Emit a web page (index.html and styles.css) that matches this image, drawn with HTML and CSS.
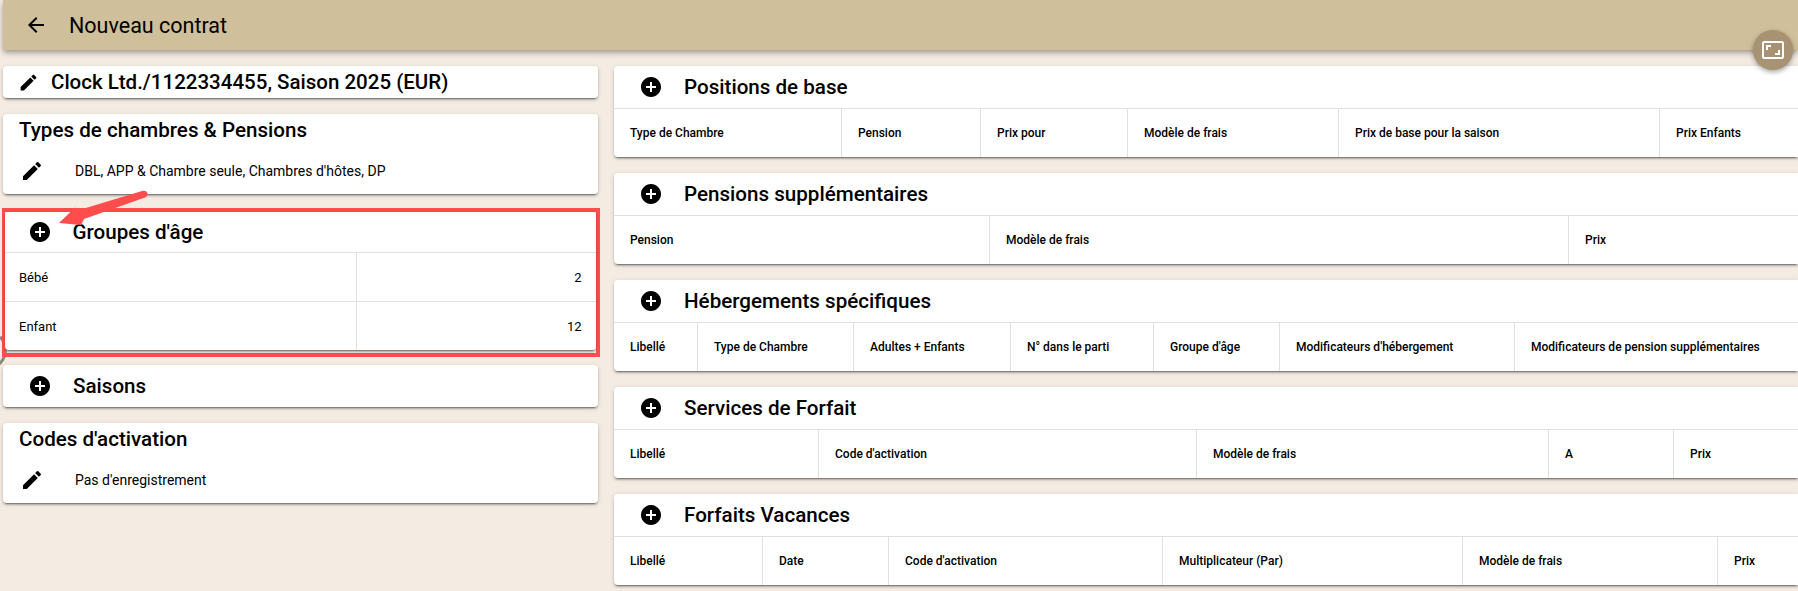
FILE: index.html
```html
<!DOCTYPE html>
<html lang="fr">
<head>
    <meta charset="UTF-8">
    <title>Nouveau contrat</title>
    <link rel="stylesheet" href="styles.css">
</head>
<body>
    <svg class="icon-defs" aria-hidden="true">
        <symbol id="ic-add" viewBox="0 0 24 24"><path d="M12 2C6.48 2 2 6.48 2 12s4.48 10 10 10 10-4.48 10-10S17.52 2 12 2zm5 11h-4v4h-2v-4H7v-2h4V7h2v4h4v2z"/></symbol>
        <symbol id="ic-edit" viewBox="0 0 24 24"><path d="M3 17.25V21h3.75L17.81 9.94l-3.75-3.75L3 17.25zM20.71 7.04a1 1 0 0 0 0-1.41l-2.34-2.34a1 1 0 0 0-1.41 0l-1.83 1.83 3.75 3.75 1.83-1.83z"/></symbol>
    </svg>

    <header class="topbar">
        <svg class="back-icon" viewBox="0 0 24 24"><path d="M20 11H7.83l5.59-5.59L12 4l-8 8 8 8 1.41-1.41L7.83 13H20v-2z"/></svg>
        <span class="topbar-title">Nouveau contrat</span>
    </header>

    <button class="fab">
        <svg viewBox="0 0 24 24"><path d="M19 12h-2v3h-3v2h5v-5zM7 9h3V7H5v5h2V9zm14-6H3c-1.1 0-2 .9-2 2v14c0 1.1.9 2 2 2h18c1.1 0 2-.9 2-2V5c0-1.1-.9-2-2-2zm0 16.01H3V4.99h18v14.02z"/></svg>
    </button>

    <main class="columns">
        <section class="left-col">
            <div class="card contract-card">
                <svg class="icon icon-small"><use href="#ic-edit"/></svg>
                <span class="card-title">Clock Ltd./1122334455, Saison 2025 (EUR)</span>
            </div>

            <div class="card text-card">
                <h2 class="card-title">Types de chambres &amp; Pensions</h2>
                <div class="text-row">
                    <svg class="icon"><use href="#ic-edit"/></svg>
                    <span>DBL, APP &amp; Chambre seule, Chambres d'hôtes, DP</span>
                </div>
            </div>

            <div class="highlight">
                <div class="card">
                    <div class="card-head age-head">
                        <svg class="icon"><use href="#ic-add"/></svg>
                        <h2 class="card-title">Groupes d'âge</h2>
                    </div>
                    <div class="age-row">
                        <div class="cell">Bébé</div>
                        <div class="cell cell-right">2</div>
                    </div>
                    <div class="age-row">
                        <div class="cell">Enfant</div>
                        <div class="cell cell-right">12</div>
                    </div>
                </div>
            </div>

            <div class="card">
                <div class="card-head saisons-head">
                    <svg class="icon"><use href="#ic-add"/></svg>
                    <h2 class="card-title">Saisons</h2>
                </div>
            </div>

            <div class="card text-card">
                <h2 class="card-title">Codes d'activation</h2>
                <div class="text-row">
                    <svg class="icon"><use href="#ic-edit"/></svg>
                    <span>Pas d'enregistrement</span>
                </div>
            </div>
        </section>

        <section class="right-col">
            <div class="card wide-card">
                <div class="card-head">
                    <svg class="icon"><use href="#ic-add"/></svg>
                    <h2 class="card-title">Positions de base</h2>
                </div>
                <div class="table-row cols-base">
                    <div class="cell">Type de Chambre</div>
                    <div class="cell">Pension</div>
                    <div class="cell">Prix pour</div>
                    <div class="cell">Modèle de frais</div>
                    <div class="cell">Prix de base pour la saison</div>
                    <div class="cell">Prix Enfants</div>
                </div>
            </div>

            <div class="card wide-card">
                <div class="card-head">
                    <svg class="icon"><use href="#ic-add"/></svg>
                    <h2 class="card-title">Pensions supplémentaires</h2>
                </div>
                <div class="table-row cols-pensions">
                    <div class="cell">Pension</div>
                    <div class="cell">Modèle de frais</div>
                    <div class="cell">Prix</div>
                </div>
            </div>

            <div class="card wide-card">
                <div class="card-head">
                    <svg class="icon"><use href="#ic-add"/></svg>
                    <h2 class="card-title">Hébergements spécifiques</h2>
                </div>
                <div class="table-row cols-hebergements">
                    <div class="cell">Libellé</div>
                    <div class="cell">Type de Chambre</div>
                    <div class="cell">Adultes + Enfants</div>
                    <div class="cell">N° dans le parti</div>
                    <div class="cell">Groupe d'âge</div>
                    <div class="cell">Modificateurs d'hébergement</div>
                    <div class="cell">Modificateurs de pension supplémentaires</div>
                </div>
            </div>

            <div class="card wide-card">
                <div class="card-head">
                    <svg class="icon"><use href="#ic-add"/></svg>
                    <h2 class="card-title">Services de Forfait</h2>
                </div>
                <div class="table-row cols-services">
                    <div class="cell">Libellé</div>
                    <div class="cell">Code d'activation</div>
                    <div class="cell">Modèle de frais</div>
                    <div class="cell">A</div>
                    <div class="cell">Prix</div>
                </div>
            </div>

            <div class="card wide-card">
                <div class="card-head">
                    <svg class="icon"><use href="#ic-add"/></svg>
                    <h2 class="card-title">Forfaits Vacances</h2>
                </div>
                <div class="table-row cols-forfaits">
                    <div class="cell">Libellé</div>
                    <div class="cell">Date</div>
                    <div class="cell">Code d'activation</div>
                    <div class="cell">Multiplicateur (Par)</div>
                    <div class="cell">Modèle de frais</div>
                    <div class="cell">Prix</div>
                </div>
            </div>
        </section>
    </main>

    <!-- annotation drawn over the screenshot -->
    <svg class="annotation-arrow" viewBox="0 0 90 36"><path d="M0 34 L16 18.5 L18.5 21.5 L83 2 Q87 1 88.5 4 Q89 7.5 86 8.5 L25 30 L22 36 Z"/></svg>
    <div class="side-handle"></div>
</body>
</html>
```

FILE: styles.css
```css
html, body {
    height: 100%;
    margin: 0;
    padding: 0;
    font-family: Roboto, Arial, sans-serif;
    color: #000;
    overflow: hidden;
}

body {
    position: relative;
    background-color: #f4ece3;
}

.icon-defs {
    display: none;
}

.topbar {
    display: flex;
    align-items: center;
    height: 50px;
    margin-left: 3px;
    padding-left: 21px;
    background-color: #cfbf9a;
    box-shadow: 0 2px 4px -1px rgba(0, 0, 0, 0.2), 0 4px 5px rgba(0, 0, 0, 0.14), 0 1px 10px rgba(0, 0, 0, 0.12);
}

.back-icon {
    width: 24px;
    height: 24px;
    margin-right: 21px;
}

.topbar-title {
    font-size: 21.5px;
}

.fab {
    position: absolute;
    top: 30px;
    right: 5px;
    display: flex;
    align-items: center;
    justify-content: center;
    width: 40px;
    height: 40px;
    padding: 0;
    border: none;
    border-radius: 50%;
    background-color: #a79273;
    box-shadow: 0 2px 5px rgba(0, 0, 0, 0.35);
}

.fab svg {
    width: 24px;
    height: 24px;
    fill: #fff;
}

.columns {
    display: flex;
    padding-top: 16px;
}

.left-col {
    display: flex;
    flex-direction: column;
    gap: 16px;
    width: 595px;
    margin-left: 3px;
    flex-shrink: 0;
}

.right-col {
    display: flex;
    flex-direction: column;
    gap: 16px;
    flex-grow: 1;
    margin-left: 16px;
}

.card {
    background-color: #fff;
    border-radius: 4px;
    box-shadow: 0 3px 1px -2px rgba(0, 0, 0, 0.3), 0 2px 2px rgba(0, 0, 0, 0.2), 0 1px 5px rgba(0, 0, 0, 0.14);
}

.wide-card {
    height: 91px;
    border-radius: 4px 0 0 4px;
}

.card-title {
    margin: 0;
    font-size: 20.6px;
    font-weight: 500;
}

.icon {
    width: 24px;
    height: 24px;
    flex-shrink: 0;
}

.contract-card {
    display: flex;
    align-items: center;
    height: 32px;
    padding-left: 15px;
}

.contract-card .card-title {
    font-size: 20.5px;
}

.icon-small {
    width: 21px;
    height: 21px;
    margin-right: 12px;
}

.text-card {
    height: 80px;
    padding: 4px 16px 0;
    box-sizing: border-box;
}

.text-row {
    display: flex;
    align-items: center;
    margin-top: 17px;
    font-size: 14px;
}

.text-row .icon {
    margin-left: 1px;
    margin-right: 31px;
}

.highlight {
    margin: -2px -2px -8px -1.5px;
    padding-bottom: 3px;
    border: 4px solid #ff4d4d;
    border-left-width: 3.5px;
}

.card-head {
    display: flex;
    align-items: center;
    height: 42px;
    padding-left: 25px;
    border-bottom: 1px solid #e0e0e0;
}

.card-head .icon {
    margin-right: 21px;
}

.age-head {
    height: 40px;
    padding-left: 23px;
}

.saisons-head {
    height: 42px;
    border-bottom: none;
}

.age-row {
    display: grid;
    grid-template-columns: 351px 1fr;
    height: 48px;
    font-size: 13px;
}

.age-row + .age-row {
    border-top: 1px solid #e0e0e0;
}

.age-row .cell {
    padding: 0 14.5px;
}

.table-row {
    display: grid;
    height: 48px;
    font-size: 12px;
    font-weight: 500;
}

.cell {
    display: flex;
    align-items: center;
    padding: 0 16px;
    border-left: 1px solid #e0e0e0;
}

.cell:first-child {
    border-left: none;
}

.cell-right {
    justify-content: flex-end;
}

.cols-base {
    grid-template-columns: 227px 139px 147px 211px 321px 1fr;
}

.cols-pensions {
    grid-template-columns: 375px 579px 1fr;
}

.cols-hebergements {
    grid-template-columns: 83px 156px 157px 143px 126px 235px 1fr;
}

.cols-services {
    grid-template-columns: 204px 378px 352px 125px 1fr;
}

.cols-forfaits {
    grid-template-columns: 148px 126px 274px 300px 255px 1fr;
}

.annotation-arrow {
    position: absolute;
    left: 59px;
    top: 189px;
    width: 90px;
    height: 36px;
    fill: #ff4d4d;
}

.side-handle {
    position: absolute;
    left: -33px;
    top: 330px;
    width: 34px;
    height: 34px;
    border: 3px solid;
    border-color: transparent #8a8a80 #8a8a80 transparent;
    border-radius: 50%;
    z-index: -1;
}
```
